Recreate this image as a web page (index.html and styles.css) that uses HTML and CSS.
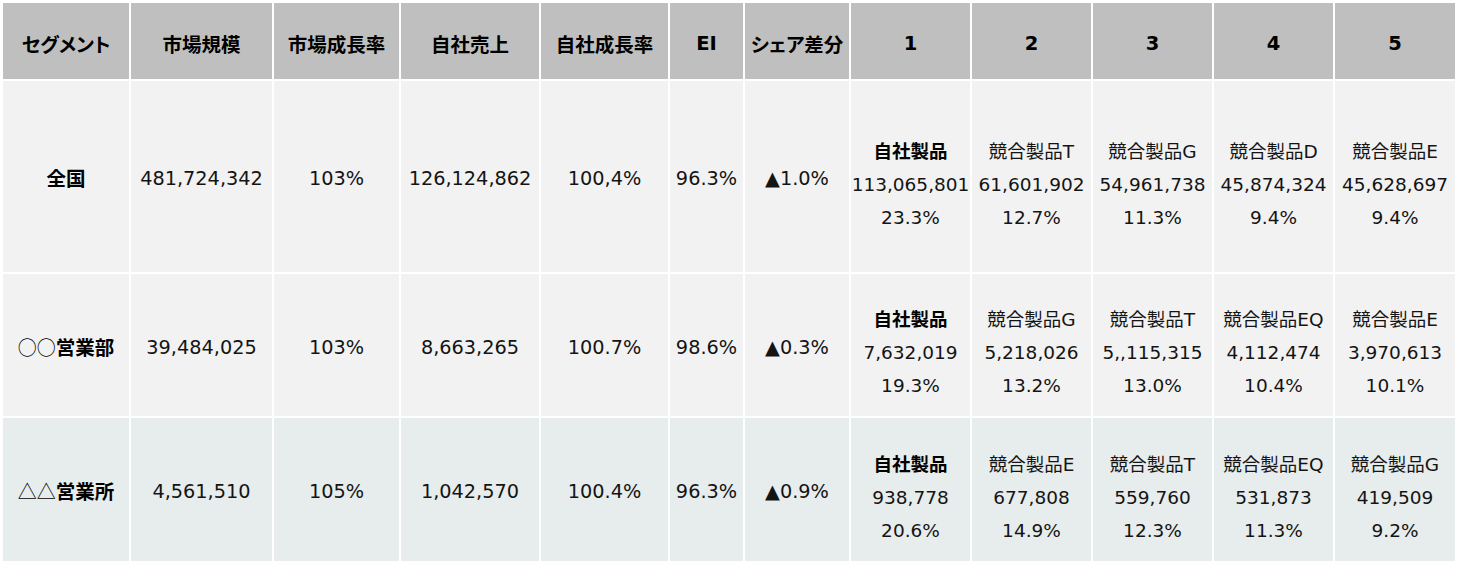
FILE: index.html
```html
<!DOCTYPE html>
<html lang="ja">
<head>
<meta charset="utf-8">
<title>シェア表</title>
<link rel="stylesheet" href="styles.css">
</head>
<body>
<table class="share">
  <colgroup>
    <col class="c-seg"><col class="c-mkt"><col class="c-mgr"><col class="c-own"><col class="c-ogr"><col class="c-ei"><col class="c-diff">
    <col class="c-rank"><col class="c-rank"><col class="c-rank"><col class="c-rank"><col class="c-rank5">
  </colgroup>
  <thead>
    <tr class="head">
      <th>セグメント</th><th>市場規模</th><th>市場成長率</th><th>自社売上</th><th>自社成長率</th><th>EI</th><th>シェア差分</th>
      <th>1</th><th>2</th><th>3</th><th>4</th><th>5</th>
    </tr>
  </thead>
  <tbody>
    <tr class="r1">
      <td class="seg">全国</td><td>481,724,342</td><td>103%</td><td>126,124,862</td><td>100,4%</td><td>96.3%</td><td>▲1.0%</td>
      <td class="rank"><b>自社製品</b><br>113,065,801<br>23.3%</td>
      <td class="rank">競合製品T<br>61,601,902<br>12.7%</td>
      <td class="rank">競合製品G<br>54,961,738<br>11.3%</td>
      <td class="rank">競合製品D<br>45,874,324<br>9.4%</td>
      <td class="rank">競合製品E<br>45,628,697<br>9.4%</td>
    </tr>
    <tr class="r2">
      <td class="seg"><span class="sym">○○</span>営業部</td><td>39,484,025</td><td>103%</td><td>8,663,265</td><td>100.7%</td><td>98.6%</td><td>▲0.3%</td>
      <td class="rank"><b>自社製品</b><br>7,632,019<br>19.3%</td>
      <td class="rank">競合製品G<br>5,218,026<br>13.2%</td>
      <td class="rank">競合製品T<br>5,,115,315<br>13.0%</td>
      <td class="rank">競合製品EQ<br>4,112,474<br>10.4%</td>
      <td class="rank">競合製品E<br>3,970,613<br>10.1%</td>
    </tr>
    <tr class="r3">
      <td class="seg"><span class="sym">△△</span>営業所</td><td>4,561,510</td><td>105%</td><td>1,042,570</td><td>100.4%</td><td>96.3%</td><td>▲0.9%</td>
      <td class="rank"><b>自社製品</b><br>938,778<br>20.6%</td>
      <td class="rank">競合製品E<br>677,808<br>14.9%</td>
      <td class="rank">競合製品T<br>559,760<br>12.3%</td>
      <td class="rank">競合製品EQ<br>531,873<br>11.3%</td>
      <td class="rank">競合製品G<br>419,509<br>9.2%</td>
    </tr>
  </tbody>
</table>
</body>
</html>
```

FILE: styles.css
```css
html, body {
  margin: 0;
  padding: 0;
  background: #ffffff;
}

.share {
  margin: 1px;
  width: 1456px;
  table-layout: fixed;
  border-collapse: separate;
  border-spacing: 2px;
  font-family: "DejaVu Sans", "Noto Sans CJK JP", sans-serif;
  font-size: 19.3px;
  color: #141414;
}

.c-seg { width: 126px; }
.c-mkt { width: 141px; }
.c-mgr { width: 125px; }
.c-own { width: 138px; }
.c-ogr { width: 127px; }
.c-ei { width: 73px; }
.c-diff { width: 104px; }
.c-rank { width: 119px; }
.c-rank5 { width: 120px; }

.share th,
.share td {
  padding: 4px 0 0 0;
  text-align: center;
  vertical-align: middle;
  white-space: nowrap;
  overflow: visible;
}

.share th {
  background: #bfbfbf;
  color: #000;
  font-weight: bold;
  font-size: 19.5px;
  font-feature-settings: "palt";
}

.head { height: 76px; }
.r1 { height: 191px; }
.r2 { height: 142px; }
.r3 { height: 143px; }

.r1 td, .r2 td { background: #f2f2f2; }
.r3 td { background: #e7ecec; }

.share td.seg {
  font-weight: bold;
  color: #000;
  font-size: 19.5px;
  padding-top: 2px;
}

.sym {
  font-weight: normal;
  font-family: "Noto Sans CJK JP", sans-serif;
  font-size: 19px;
}

.share td.rank {
  padding-top: 15px;
  line-height: 33px;
  font-size: 18.5px;
}

.rank b {
  font-weight: bold;
  color: #000;
}
```
